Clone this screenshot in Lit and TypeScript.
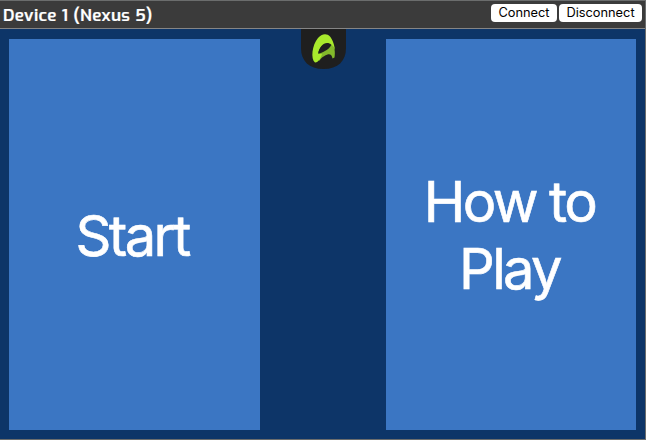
import { LitElement, html, css } from "lit";
import { customElement } from "lit/decorators.js";

@customElement("app-root")
export class AppRoot extends LitElement {
  static styles = css`
    :host {
      display: block;
      height: 440px;
      background: #fff;
      overflow: hidden;
    }
    .device {
      box-sizing: border-box;
      width: 646px;
      height: 440px;
      display: flex;
      flex-direction: column;
      border: solid #6b6d6d;
      border-width: 1px 1px 1px 0;
      background: #0d3568;
    }
    .bar {
      box-sizing: border-box;
      height: 28px;
      flex: none;
      display: flex;
      justify-content: space-between;
      align-items: flex-start;
      background: #3b3b3b;
      border-bottom: 1px solid #858585;
      padding: 3px 3px 0 3px;
    }
    .title {
      font: 600 17px/23px Exo, "Open Sans", sans-serif;
      letter-spacing: 0.4px;
      -webkit-text-stroke: 0.2px #fff;
      color: #fff;
      white-space: nowrap;
    }
    .actions {
      display: flex;
      gap: 2px;
    }
    button {
      height: 18px;
      border: 0;
      border-radius: 4px;
      padding: 0;
      background: #fff;
      color: #000;
      font: 12.8px/18px Inter, sans-serif;
    }
    .connect {
      width: 66px;
    }
    .disconnect {
      width: 83px;
    }
    .screen {
      position: relative;
      flex: 1;
      display: flex;
      justify-content: space-between;
      padding: 10px 9px 9px 9px;
    }
    .tile {
      box-sizing: border-box;
      width: 251px;
      padding: 3px 5px 0 0;
      display: flex;
      align-items: center;
      justify-content: center;
      text-align: center;
      background: #3b76c3;
      color: #fff;
      font: 400 56px/67px Inter, sans-serif;
      letter-spacing: -2.6px;
      -webkit-text-stroke: 0.6px #fff;
    }
    .tile.play {
      width: 250px;
      padding-right: 3px;
    }
    .badge {
      position: absolute;
      left: 301px;
      top: 0;
      width: 45px;
      height: 40px;
      display: block;
    }
  `;

  render() {
    return html`
      <div class="device">
        <div class="bar">
          <div class="title">Device 1 (Nexus 5)</div>
          <div class="actions">
            <button class="connect">Connect</button>
            <button class="disconnect">Disconnect</button>
          </div>
        </div>
        <div class="screen">
          <div class="tile"><span>Start</span></div>
          <div class="tile play"><span>How to<br />Play</span></div>
          <svg class="badge" viewBox="0 0 45 40">
            <path d="M0 0H45V19C45 32 37 40 22.500 40S0 32 0 19Z" fill="#1f1f1f" />
            <path
              d="M16.500 26C19 23.500 25 23 29 18L31 15C33.500 18 34.500 23 33.500 28.500L31.500 29.500C31 26 29 24.500 26.500 25.500C23 27 21 28 18 32Z"
              fill="#83b92b"
            />
            <path
              d="M14 33.500C9.500 30 11 16 17 9C20.500 4.500 26 4 29 7.500C31.500 10.500 33.500 16 34 21C32.500 17 30 14.500 27 14C22 13.500 18.500 18 17 24.500L21 25C20 29 17 34 14 33.500Z"
              fill="#a9ea2c"
            />
            <path d="M17.500 23.500C19 18 23 14.500 26.500 14.500C29 14.500 29 16.500 26.500 19C23.500 21.500 20.500 21 17.500 23.500Z" fill="#1f1f1f" />
          </svg>
        </div>
      </div>
    `;
  }
}
